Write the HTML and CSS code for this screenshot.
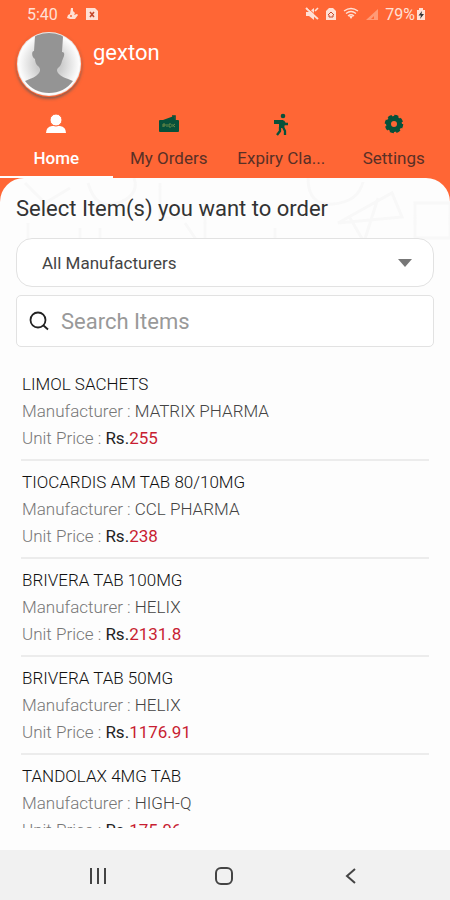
FILE: index.html
```
<!DOCTYPE html>
<html lang="en">
  <head>
    <meta charset="UTF-8" />
    <meta name="viewport" content="width=device-width, initial-scale=1.0" />
    <title>Select Items</title>
    <link rel="stylesheet" href="styles.css">
  </head>
  <body>
    <header class="header">
      <div class="status-bar">
        <div class="status-group">
          <span>5:40</span>
          <svg width="12" height="14" viewBox="0 0 12 14" fill="currentColor">
            <path d="M5 1h2v3l2 2-1 2 3-1 1 1-3 4H4L1 11l1-3 2-1z" />
            <circle cx="5" cy="9" r="1" fill="#ff6635" />
          </svg>
          <svg class="sim-icon" width="12" height="14" viewBox="0 0 12 14">
            <path d="M0 1h9l3 3v9H0z" fill="currentColor" />
            <path d="M4 5l4 5M8 5l-4 5" stroke="#c5482c" stroke-width="1.6" />
          </svg>
        </div>
        <div class="status-group right">
          <svg width="14" height="14" viewBox="0 0 14 14" fill="currentColor">
            <path d="M1 5h3l5-4v12L4 9H1z" />
            <path d="M1 1l12 11" stroke="currentColor" stroke-width="2" />
            <path d="M3 1l11 10" stroke="#ff6635" />
            <path d="M10 4l3-3" stroke="currentColor" stroke-width="1.6" />
          </svg>
          <svg width="12" height="14" viewBox="0 0 12 14">
            <path d="M1 4l3-3h4l3 3v9H1z" fill="currentColor" />
            <path d="M3 8l3-3 3 3M4 8v2h4V8" fill="none" stroke="#c5482c" />
          </svg>
          <svg width="16" height="14" viewBox="0 0 16 14" fill="none" stroke="currentColor" stroke-width="1.3">
            <path d="M1 4q7-5 14 0M3 6.500q5-4 10 0M5 9q3-2.500 6 0" />
            <path d="M6 9h4l-2 3z" fill="currentColor" stroke="none" />
          </svg>
          <svg width="14" height="14" viewBox="0 0 14 14">
            <path d="M1 13L13 2v11z" fill="#ff9a77" />
            <path d="M6 12l3-3v3z" fill="#ff6635" />
          </svg>
          <span class="battery">79%
            <svg width="10" height="14" viewBox="0 0 10 14">
              <path d="M1 3h2V1h4v2h2v10H1z" fill="currentColor" />
              <path d="M6 4L2.500 8.500H5L4 12l4-5H5.500z" fill="#333" />
            </svg>
          </span>
        </div>
      </div>

      <div class="profile">
        <svg class="avatar" viewBox="0 0 66 66">
          <defs>
            <radialGradient id="avatarBg">
              <stop offset="0.400" stop-color="#ccc" />
              <stop offset="1" stop-color="#fff" />
            </radialGradient>
            <clipPath id="avatarClip"><circle cx="33" cy="33" r="31" /></clipPath>
          </defs>
          <circle cx="33" cy="33" r="32" fill="#e9e9e9" />
          <circle cx="33" cy="33" r="31" fill="url(#avatarBg)" />
          <path clip-path="url(#avatarClip)" fill="#949494" d="M19 5q0-2 5-3h18q5 1 5 4l-1 15q3 0 2 4l-2 5q-1 5-4 7-2 2 0 5c3 4 8 5 15 8-6 8-14 12-24 12S15 58 9 50c7-3 11-4 14-8 2-3 1-5-1-7-2-1-3-5-3-7-3-1-4-8-1-8z" />
        </svg>
        <span class="username">gexton</span>
      </div>

      <nav class="tabs">
        <button class="tab active">
          <svg width="22" height="22" viewBox="0 0 22 22" fill="currentColor">
            <path d="M1 20q0-6 6-7h8q6 1 6 7z" />
            <circle cx="11" cy="7" r="6" stroke="#ff6635" />
          </svg>
          <span>Home</span>
        </button>
        <button class="tab">
          <svg width="22" height="22" viewBox="0 0 22 22" fill="#07513a">
            <path d="M1 8q0-1 1-1h18q1 0 1 1v10q0 1-1 1H2q-1 0-1-1z" />
            <path d="M5 7l11-4 1 4z" />
            <path d="M14 3h3v4" fill="none" stroke="#07513a" stroke-width="1.600" />
            <path d="M5 14v-3h2v2H5M9 11v3M13 11h-2v3h2M14 11v3m3-3l-2 1.500 2 1.500" fill="none" stroke="#6b8a47" />
          </svg>
          <span>My Orders</span>
        </button>
        <button class="tab">
          <svg width="22" height="24" viewBox="0 0 22 24">
            <circle cx="13" cy="3" r="2.300" fill="#07513a" />
            <path d="M4 7h9l2 4-1 4H9v-4H4z" fill="#07513a" />
            <path d="M13 8l2 3h3M10 14v4l-3 4M13 14l2 4v4" fill="none" stroke="#07513a" stroke-width="2.300" />
          </svg>
          <span>Expiry Cla...</span>
        </button>
        <button class="tab">
          <svg width="22" height="22" viewBox="0 0 22 22">
            <circle cx="11" cy="11" r="5.500" fill="none" stroke="#07513a" stroke-width="5" />
            <circle cx="11" cy="11" r="8" fill="none" stroke="#07513a" stroke-width="2.500" stroke-dasharray="4 2.280" />
          </svg>
          <span>Settings</span>
        </button>
      </nav>
    </header>

    <main class="sheet">
      <svg class="pattern" viewBox="0 0 450 180" fill="none" stroke="#f8f8f8" stroke-width="3">
        <path d="M25 5l20 20 25-15M160 5v35h25M28 45v25h20M80 50v20h20V50M185 45l20 30M205 25v40h30M338 45l54-30 10 24zM350 40l14 24 14-44M415 25h35v35h-35zM275 50v20M415 60v15" />
        <path d="M88 5q8 28 30 20t16-25M308 0q0 28 25 26t30-22" />
      </svg>

      <h1>Select Item(s) you want to order</h1>
      <div class="select-box">
        <select aria-label="Manufacturer">
          <option>All Manufacturers</option>
        </select>
        <svg width="16" height="10" viewBox="0 0 16 10"><path d="M1 1h14L8 9z" fill="#777" /></svg>
      </div>
      <label class="search-box">
        <svg width="20" height="20" viewBox="0 0 20 20" fill="none" stroke="#222" stroke-width="1.800">
          <circle cx="9" cy="9" r="7.500" />
          <path d="M14.500 14.500L19 18.500" />
        </svg>
        <input type="text" placeholder="Search Items" aria-label="Search Items" />
      </label>

      <ul class="items">
        <li>
          <h2>LIMOL SACHETS</h2>
          <p>Manufacturer : <span class="maker">MATRIX PHARMA</span></p>
          <p>Unit Price : <span class="currency">Rs.</span><span class="price">255</span></p>
        </li>
        <li>
          <h2>TIOCARDIS AM TAB 80/10MG</h2>
          <p>Manufacturer : <span class="maker">CCL PHARMA</span></p>
          <p>Unit Price : <span class="currency">Rs.</span><span class="price">238</span></p>
        </li>
        <li>
          <h2>BRIVERA TAB 100MG</h2>
          <p>Manufacturer : <span class="maker">HELIX</span></p>
          <p>Unit Price : <span class="currency">Rs.</span><span class="price">2131.8</span></p>
        </li>
        <li>
          <h2>BRIVERA TAB 50MG</h2>
          <p>Manufacturer : <span class="maker">HELIX</span></p>
          <p>Unit Price : <span class="currency">Rs.</span><span class="price">1176.91</span></p>
        </li>
        <li>
          <h2>TANDOLAX 4MG TAB</h2>
          <p>Manufacturer : <span class="maker">HIGH-Q</span></p>
          <p>Unit Price : <span class="currency">Rs.</span><span class="price">175.06</span></p>
        </li>
      </ul>
    </main>

    <!-- Android navigation -->
    <footer class="nav-bar">
      <button aria-label="Recent apps">
        <svg width="20" height="20" viewBox="0 0 20 20" stroke="#444" stroke-width="2"><path d="M3 2v16M10 2v16M17 2v16" /></svg>
      </button>
      <button aria-label="Home">
        <svg width="20" height="20" viewBox="0 0 20 20" fill="none" stroke="#444" stroke-width="2"><rect x="2" y="2" width="16" height="16" rx="5" /></svg>
      </button>
      <button aria-label="Back">
        <svg width="20" height="20" viewBox="0 0 20 20" fill="none" stroke="#444" stroke-width="2"><path d="M15 3l-8 7 8 7" /></svg>
      </button>
    </footer>
  </body>
</html>
```

FILE: styles.css
```
:root {
  --orange: #ff6635;
  --line-color: #e2e2e2;
}

* {
  box-sizing: border-box;
}

body {
  margin: 0;
  height: 100vh;
  display: flex;
  flex-direction: column;
  background: var(--orange);
  font-family: Roboto, sans-serif;
  color: #333;
}

h1,
h2,
p,
ul {
  margin: 0;
  padding: 0;
  font-weight: 400;
}

button {
  background: none;
  border: none;
  padding: 0;
  font: inherit;
  cursor: pointer;
}

.header {
  color: #fff;
}

.status-bar {
  display: flex;
  justify-content: space-between;
  padding: 0 24px 0 27px;
  height: 28px;
  font-size: 16px;
  color: #ffe0d5;
}

.status-group {
  display: flex;
  align-items: center;
  gap: 8px;
}

.status-group.right {
  gap: 6px;
}

.battery {
  display: flex;
  align-items: center;
  gap: 1px;
}

.profile {
  display: flex;
  align-items: flex-start;
  gap: 11px;
  padding: 3px 16px 0;
  height: 80px;
}

.avatar {
  width: 66px;
  height: 66px;
  border-radius: 50%;
  box-shadow: 0 2px 3px rgba(90, 90, 90, 0.7);
}

.username {
  padding-top: 9px;
  font-size: 22px;
  line-height: 26px;
}

.tabs {
  display: grid;
  grid-template-columns: repeat(4, 1fr);
  height: 70px;
}

.tab {
  display: flex;
  flex-direction: column;
  align-items: center;
  justify-content: space-between;
  padding: 5px 0 7px;
  border-bottom: 2px solid transparent;
  font-size: 17px;
  line-height: 22px;
  color: #5a3026;
}

.tab.active {
  border-bottom-color: #fff;
  color: #fff;
  font-weight: 500;
}

.sheet {
  flex: 1;
  min-height: 0;
  display: flex;
  flex-direction: column;
  position: relative;
  padding: 17px 16px 22px;
  border-radius: 24px 24px 0 0;
  background: #fdfdfd;
  overflow: hidden;
}

.pattern {
  position: absolute;
  top: 0;
  left: 0;
  width: 100%;
}

.sheet h1 {
  position: relative;
  font-size: 22px;
  line-height: 28px;
  color: #333;
}

.select-box,
.search-box {
  display: flex;
  align-items: center;
  flex-shrink: 0;
  position: relative;
  border: 1px solid var(--line-color);
  background: #fff;
}

.select-box {
  height: 49px;
  margin-top: 15px;
  padding: 0 20px 0 25px;
  border-radius: 16px;
}

.select-box select {
  flex: 1;
  appearance: none;
  border: none;
  padding: 0;
  background: none;
  font: inherit;
  font-size: 17px;
  color: #444;
}

.search-box {
  height: 52px;
  margin-top: 8px;
  padding: 0 12px;
  gap: 12px;
  border-radius: 5px;
}

.search-box input {
  flex: 1;
  min-width: 0;
  border: none;
  padding: 0;
  outline: none;
  background: none;
  font: inherit;
  font-size: 22px;
}

.search-box input::placeholder {
  color: #999;
}

.items {
  flex: 1;
  min-height: 0;
  margin: 16px 5px 0;
  overflow: hidden;
  list-style: none;
}

.items li {
  padding: 8px 1px 7px;
  border-bottom: 2px solid #ececec;
  line-height: 27px;
}

.items h2,
.items p {
  font-size: 17px;
  font-weight: 300;
}

.items h2 {
  color: #111;
}

.items p {
  color: #777;
}

.items .maker {
  color: #444;
}

.items .currency {
  color: #222;
  font-weight: 400;
}

.items .price {
  color: #c81e32;
  font-weight: 400;
}

.nav-bar {
  display: flex;
  justify-content: space-between;
  align-items: center;
  height: 50px;
  padding: 2px 90px 0 88px;
  background: #f1f1f1;
}

.nav-bar button,
.nav-bar svg {
  display: block;
}
```
